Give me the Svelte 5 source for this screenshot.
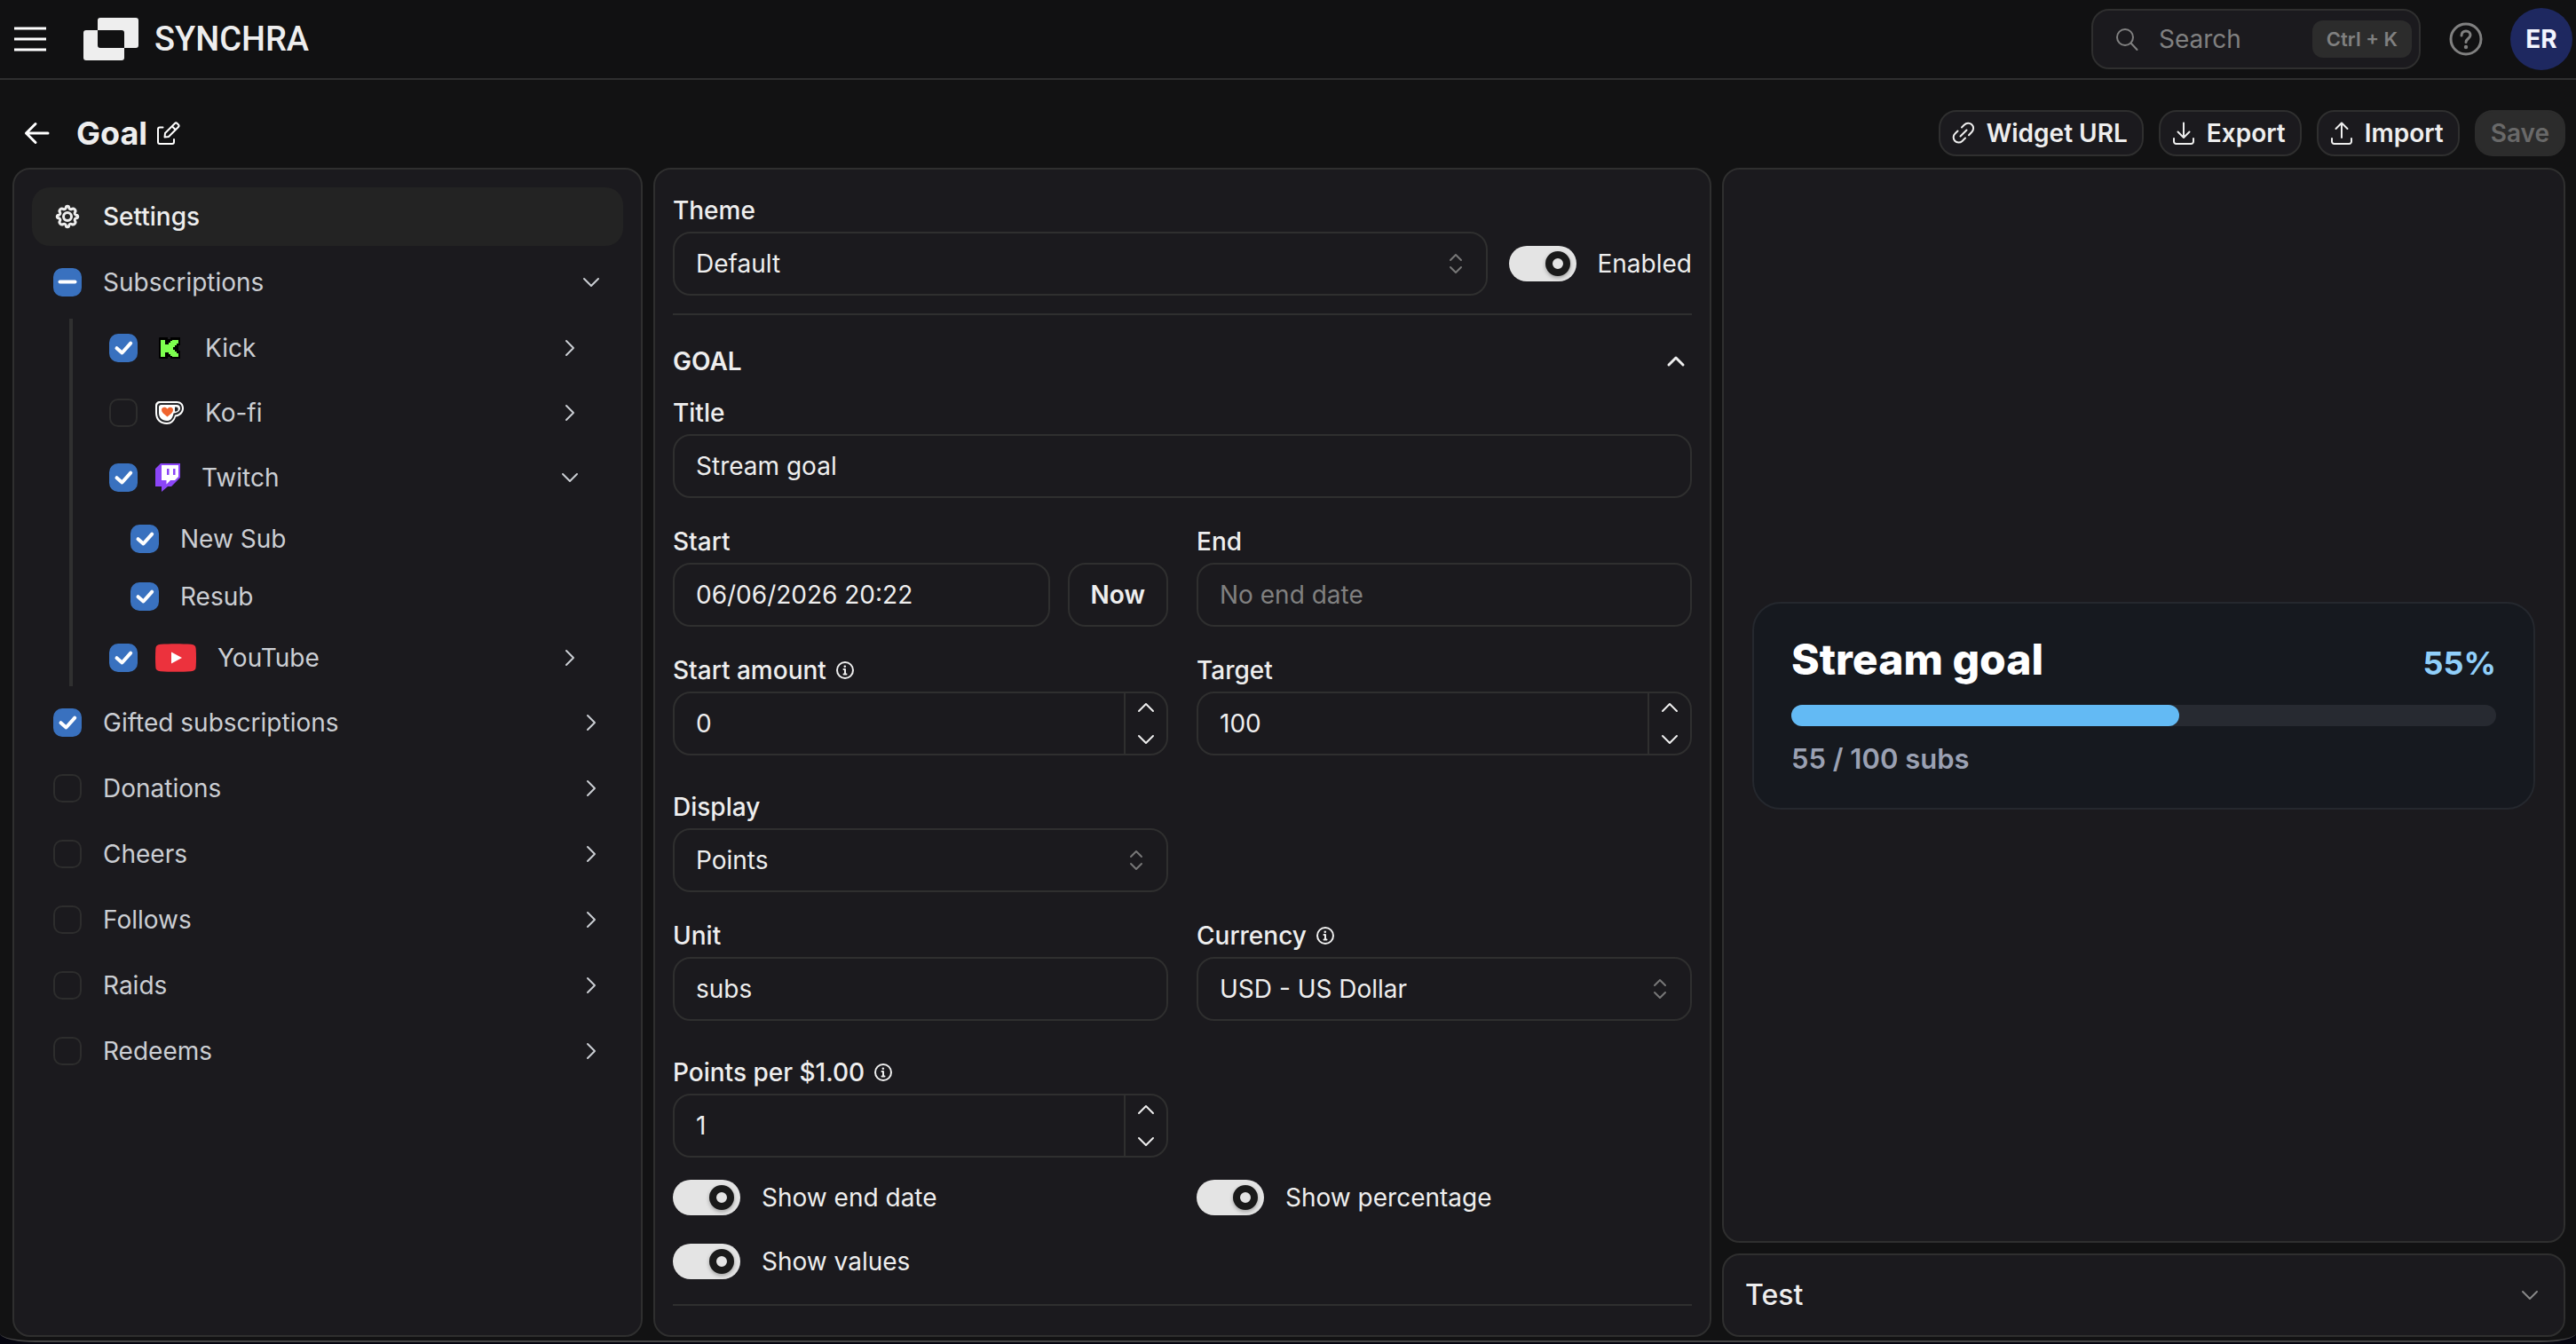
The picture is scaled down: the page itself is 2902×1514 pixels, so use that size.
<script>
	let goal = $state({
		theme: 'Default',
		enabled: true,
		title: 'Stream goal',
		start: '06/06/2026 20:22',
		end: '',
		startAmount: 0,
		target: 100,
		display: 'Points',
		unit: 'subs',
		currency: 'USD - US Dollar',
		points: 1,
		showEnd: true,
		showPercentage: true,
		showValues: true
	});

	let tree = $state([
		{
			id: 'subscriptions', name: 'Subscriptions', checked: false, partial: true, open: true,
			children: [
				{ id: 'kick', name: 'Kick', checked: true },
				{ id: 'kofi', name: 'Ko-fi', checked: false },
				{
					id: 'twitch', name: 'Twitch', checked: true, open: true,
					children: [
						{ id: 'new-sub', name: 'New Sub', checked: true },
						{ id: 'resub', name: 'Resub', checked: true }
					]
				},
				{ id: 'youtube', name: 'YouTube', checked: true }
			]
		},
		{ id: 'gifted', name: 'Gifted subscriptions', checked: true },
		{ id: 'donations', name: 'Donations', checked: false },
		{ id: 'cheers', name: 'Cheers', checked: false },
		{ id: 'follows', name: 'Follows', checked: false },
		{ id: 'raids', name: 'Raids', checked: false },
		{ id: 'redeems', name: 'Redeems', checked: false }
	]);

	const current = 55;
	let percent = $derived(Math.round((current / goal.target) * 100));

	function step(key, amount) {
		goal[key] = Number(goal[key]) + amount;
	}
</script>

{#snippet chevron(dir)}
	<svg class="chevron {dir}" viewBox="0 0 28 28" aria-hidden="true"><path d="M6 10l8 8 8-8" /></svg>
{/snippet}

{#snippet info()}
	<svg class="info" viewBox="0 0 24 24" aria-hidden="true">
		<circle cx="12" cy="12" r="9" />
		<path d="M10.5 11H12v5.5M10.5 16.5h3" />
		<circle class="dot" cx="11.8" cy="7.8" r="1.3" />
	</svg>
{/snippet}

{#snippet brand(id)}
	{#if id === 'kick'}
		<svg class="brand" width="32" height="32" viewBox="0 0 32 32" aria-hidden="true">
			<path fill="#000" d="M5 4h9v2h3V4h11v9h-2v6h2v9H17v-2h-3v2H5a1 1 0 0 1-1-1V5a1 1 0 0 1 1-1z" />
			<path fill="#7dff4f" d="M6 7h5v5h4v-2h2V8h2V7h7v4h-2v2h-2v2h-2v3h2v2h2v2h2v4h-7v-1h-2v-2h-2v-2h-4v5H6z" />
		</svg>
	{:else if id === 'kofi'}
		<svg class="brand" width="32" height="28" viewBox="0 0 32 28" aria-hidden="true">
			<path fill="#fff" d="M5 1h19c5 0 8 3 8 8s-4 9-9 9.500C21.500 24 18 27 13 27 5 27 0 22 0 14V6c0-3 2-5 5-5z" />
			<path fill="#27282b" d="M6 3h18c3.500 0 6 2 6 6s-3.500 7-8 7.500C20.500 22 17.500 25 13 25 6 25 2 20.500 2 14V7c0-2.500 1.500-4 4-4z" />
			<path fill="#fff" d="M6.500 5H24c2.500 0 4 1.500 4 4s-2.500 5-7.500 5.500C19.500 20.500 17 23 13 23 7.500 23 4 19.500 4 14V7.500C4 6 5 5 6.500 5z" />
			<path fill="#27282b" d="M22 7.500h1.500c3 0 3 5-.5 5h-1z" />
			<path fill="#f0642e" d="M13.500 18.500C9.500 15.500 7 13.500 7 10.800 7 7.500 11.500 6.500 13.500 9.700c2-3.200 6.500-2.200 6.500 1.100 0 2.700-2.500 4.700-6.500 7.700z" />
		</svg>
	{:else if id === 'twitch'}
		<svg class="brand" width="28" height="32" viewBox="0 0 28 32" aria-hidden="true">
			<path fill="#8b45f7" d="M6 0h22v16l-10 10h-4l-7 6v-6H0V6z" />
			<path fill="#fff" d="M7 2h19v13l-4 4h-5l-4.500 4.500V19H7z" />
			<path fill="#8b45f7" d="M13 6h2.500v7H13zM20 6h2.500v7H20z" />
		</svg>
	{:else if id === 'youtube'}
		<svg class="brand" width="46" height="32" viewBox="0 0 46 32" aria-hidden="true">
			<path fill="#ec323d" d="M6 .7C16 0 30 0 40 .7c4 .3 5.500 2 5.700 5.300.4 7 .4 13 0 20-.2 3.300-1.700 5-5.700 5.300-10 .7-24 .7-34 0C2 31 .5 29.300.3 26c-.4-7-.4-13 0-20C.5 2.700 2 1 6 .7z" />
			<path fill="#fff" d="M18 9.500l12 6.500-12 6.500z" />
		</svg>
	{/if}
{/snippet}

{#snippet branch(item)}
	<div class="row">
		<span class="check">
			<input type="checkbox" id={item.id} bind:checked={item.checked} indeterminate={item.partial ?? false} />
			<svg viewBox="0 0 32 32" aria-hidden="true">
				<path d={item.partial ? 'M7.500 15.500h17' : 'M8.500 16.200l6 5.300 9.700-10.800'} />
			</svg>
		</span>
		{@render brand(item.id)}
		<label for={item.id}>{item.name}</label>
	</div>
{/snippet}

{#snippet parentRow(item)}
	<div class="line">
		{@render branch(item)}
		<button class="bare" aria-label="Toggle {item.name}" onclick={() => (item.open = !item.open)}>
			{@render chevron(item.open ? 'down' : 'right')}
		</button>
	</div>
{/snippet}

{#snippet toggle(key, text)}
	<label class="toggle">
		<input type="checkbox" role="switch" bind:checked={goal[key]} />
		<span>{text}</span>
	</label>
{/snippet}

{#snippet select(id, key, options)}
	<div class="select">
		<select {id} bind:value={goal[key]}>
			{#each options as option}
				<option>{option}</option>
			{/each}
		</select>
		<svg viewBox="0 0 16 24" aria-hidden="true"><path d="M2 8l6-6 6 6M2 16l6 6 6-6" /></svg>
	</div>
{/snippet}

{#snippet number(id, key)}
	<div class="number">
		<input type="number" {id} bind:value={goal[key]} />
		<div class="steps">
			<button class="bare" aria-label="Increase" onclick={() => step(key, 1)}>{@render chevron('up')}</button>
			<button class="bare" aria-label="Decrease" onclick={() => step(key, -1)}>{@render chevron('down')}</button>
		</div>
	</div>
{/snippet}

<div class="app">
	<header>
		<button class="bare menu" aria-label="Menu">
			<svg width="36" height="28" viewBox="0 0 36 28" aria-hidden="true"><path d="M0 2h36M0 14h36M0 26h36" /></svg>
		</button>
		<a class="logo" href="/">
			<svg width="62" height="48" viewBox="0 0 62 48" aria-hidden="true">
				<path
					fill-rule="evenodd"
					d="M19 0h40a3 3 0 0 1 3 3v28a3 3 0 0 1-3 3H46v11a3 3 0 0 1-3 3H3a3 3 0 0 1-3-3V17a3 3 0 0 1 3-3h13V3a3 3 0 0 1 3-3zM16 14v17a3 3 0 0 0 3 3h27V17a3 3 0 0 0-3-3z"
				/>
			</svg>
			<span>SYNCHRA</span>
		</a>
		<button class="search">
			<svg width="28" height="28" viewBox="0 0 28 28" aria-hidden="true"><circle cx="12" cy="12" r="9" /><path d="M18.500 18.500l7 7.500" /></svg>
			<span>Search</span>
			<kbd>Ctrl + K</kbd>
		</button>
		<button class="bare help" aria-label="Help">
			<svg width="38" height="38" viewBox="0 0 38 38" aria-hidden="true">
				<circle cx="19" cy="19" r="17" />
				<path d="M14 15c0-3 2-5 5-5s5 2 5 4.500c0 4-5 4-5 8" />
				<circle class="dot" cx="19" cy="28" r="2.200" />
			</svg>
		</button>
		<button class="avatar">ER</button>
	</header>

	<div class="toolbar">
		<a class="back" href="/widgets" aria-label="Back">
			<svg width="36" height="36" viewBox="0 0 36 36" aria-hidden="true"><path d="M30 18H5.500M16 7.500L5.500 18 16 28.500" /></svg>
		</a>
		<h1>Goal</h1>
		<button class="bare edit" aria-label="Rename">
			<svg width="28" height="28" viewBox="0 0 28 28" aria-hidden="true">
				<path d="M8.500 7.500H5a2 2 0 0 0-2 2V24a2 2 0 0 0 2 2h14a2 2 0 0 0 2-2v-3" />
				<path d="M10.500 18.500l.5-4.500L22 3a1.800 1.800 0 0 1 2.500 0L26 4.500A1.800 1.800 0 0 1 26 7L15 18zM18.800 6.200l4 4" />
			</svg>
		</button>
		<div class="actions">
			<button class="button">
				<svg width="28" height="28" viewBox="0 0 28 28" aria-hidden="true">
					<path d="M10.500 17.500l7-7M12 7.500l3-3a5.800 5.800 0 0 1 8.500 8l-3.500 3.800M7.500 11.500l-3 3a5.800 5.800 0 0 0 8 8.500l3.500-3.500" />
				</svg>
				Widget URL
			</button>
			<button class="button">
				<svg width="28" height="28" viewBox="0 0 28 28" aria-hidden="true"><path d="M14 2.500v16M7.500 12.500L14 19l6.500-6.500M3 20v3.500a2.500 2.500 0 0 0 2.500 2.500h17a2.500 2.500 0 0 0 2.500-2.500V20" /></svg>
				Export
			</button>
			<button class="button">
				<svg width="28" height="28" viewBox="0 0 28 28" aria-hidden="true"><path d="M14 19V3M7.500 9L14 2.500 20.500 9M3 20v3.500a2.500 2.500 0 0 0 2.500 2.500h17a2.500 2.500 0 0 0 2.500-2.500V20" /></svg>
				Import
			</button>
			<button class="button save" disabled>Save</button>
		</div>
	</div>

	<main>
		<nav class="panel tree">
			<button class="settings">
				<svg width="32" height="32" viewBox="0 0 32 32" aria-hidden="true">
					<path
						d="M14.200 6.300C14.400 3.600 17.600 3.600 17.800 6.300C18 7.600 19.800 8.300 20.900 7.500C22.900 5.800 26.200 9.100 24.500 11.100C23.700 12.200 24.400 14 25.700 14.200C28.400 14.400 28.400 17.600 25.700 17.800C24.400 18 23.700 19.800 24.500 20.900C26.200 22.900 22.900 26.200 20.900 24.500C19.800 23.700 18 24.400 17.800 25.700C17.600 28.400 14.400 28.400 14.200 25.700C14 24.400 12.200 23.700 11.100 24.500C9.100 26.200 5.800 22.900 7.500 20.900C8.300 19.800 7.600 18 6.300 17.800C3.600 17.600 3.600 14.400 6.300 14.200C7.600 14 8.300 12.200 7.500 11.100C5.800 9.100 9.100 5.800 11.100 7.500C12.200 8.300 14 7.600 14.200 6.300Z"
					/>
					<circle cx="16" cy="16" r="4.500" />
				</svg>
				Settings
			</button>
			{#each tree as item (item.id)}
				{@render parentRow(item)}
				{#if item.open && item.children}
					<div class="children">
						{#each item.children as child (child.id)}
							{@render parentRow(child)}
							{#if child.open && child.children}
								<div class="leaves">
									{#each child.children as leaf (leaf.id)}
										{@render branch(leaf)}
									{/each}
								</div>
							{/if}
						{/each}
					</div>
				{/if}
			{/each}
		</nav>

		<section class="panel form">
			<label class="caption" for="theme">Theme</label>
			<div class="theme">
				{@render select('theme', 'theme', ['Default', 'Minimal'])}
				{@render toggle('enabled', 'Enabled')}
			</div>
			<hr />
			<button class="bare section">GOAL {@render chevron('up')}</button>
			<div class="fields">
				<div class="wide">
					<label class="caption" for="title">Title</label>
					<input type="text" id="title" bind:value={goal.title} />
				</div>
				<div>
					<label class="caption" for="start">Start</label>
					<div class="start">
						<input type="text" id="start" bind:value={goal.start} />
						<button class="now">Now</button>
					</div>
				</div>
				<div>
					<label class="caption" for="end">End</label>
					<input type="text" id="end" placeholder="No end date" bind:value={goal.end} />
				</div>
				<div class="spaced">
					<label class="caption" for="start-amount">Start amount {@render info()}</label>
					{@render number('start-amount', 'startAmount')}
				</div>
				<div class="spaced">
					<label class="caption" for="target">Target</label>
					{@render number('target', 'target')}
				</div>
				<div class="first">
					<label class="caption" for="display">Display</label>
					{@render select('display', 'display', ['Points', 'Currency'])}
				</div>
				<div class="first spaced">
					<label class="caption" for="unit">Unit</label>
					<input type="text" id="unit" bind:value={goal.unit} />
				</div>
				<div class="spaced">
					<label class="caption" for="currency">Currency {@render info()}</label>
					{@render select('currency', 'currency', ['USD - US Dollar', 'EUR - Euro'])}
				</div>
				<div class="first spaced">
					<label class="caption" for="points">Points per $1.00 {@render info()}</label>
					{@render number('points', 'points')}
				</div>
			</div>
			<div class="toggles">
				{@render toggle('showEnd', 'Show end date')}
				{@render toggle('showPercentage', 'Show percentage')}
				{@render toggle('showValues', 'Show values')}
			</div>
			<hr />
		</section>

		<div class="side">
			<section class="panel preview">
				<div class="card">
					<div class="card-head">
						<h2>{goal.title}</h2>
						<strong>{percent}%</strong>
					</div>
					<div class="bar"><div class="fill" style="width: {percent}%"></div></div>
					<p>{current} / {goal.target} {goal.unit}</p>
				</div>
			</section>
			<button class="panel test">Test {@render chevron('down')}</button>
		</div>
	</main>
</div>

<style>
	:global(body) {
		background: #05050f;
	}

	.app {
		--line: #2f2f2f;
		--text: #eeeeee;
		--muted: #808080;
		--panel: #1b1a1e;

		box-sizing: border-box;
		display: flex;
		flex-direction: column;
		min-height: calc(100vh - 2px);
		padding-bottom: 4px;
		border-bottom: 2px solid #444444;
		border-radius: 0 0 40px 40px / 0 0 10px 10px;
		background: #121213;
		color: var(--text);
		font-family: Inter, 'Liberation Sans', sans-serif;
		font-size: 28px;
		line-height: 44px;
	}

	.app *,
	.app *::before {
		box-sizing: border-box;
	}

	button,
	input,
	select {
		margin: 0;
		font: inherit;
		color: inherit;
	}

	svg {
		flex: none;
		display: block;
		fill: none;
		stroke: currentColor;
		stroke-width: 3;
		stroke-linecap: round;
		stroke-linejoin: round;
	}

	.dot {
		fill: currentColor;
		stroke: none;
	}

	.bare {
		display: flex;
		align-items: center;
		padding: 0;
		border: 0;
		background: none;
	}

	.chevron {
		width: 28px;
		height: 28px;
		stroke-width: 2;
	}

	.right { transform: rotate(-90deg); }
	.up { transform: rotate(180deg); }

	/* Header */
	header {
		display: flex;
		align-items: center;
		height: 90px;
		padding: 0 4px 0 16px;
		border-bottom: 2px solid var(--line);
		background: #111112;
	}

	.menu {
		color: #ffffff;
	}

	.menu svg {
		stroke-linecap: butt;
	}

	.logo {
		display: flex;
		align-items: center;
		gap: 18px;
		margin: 0 auto 0 42px;
		color: var(--text);
		font-family: Roboto, 'Liberation Sans', sans-serif;
		font-size: 38px;
		font-weight: 500;
		text-decoration: none;
	}

	.logo svg {
		fill: currentColor;
		stroke: none;
	}

	.search {
		display: flex;
		align-items: center;
		width: 371px;
		height: 68px;
		padding: 0 8px 0 24px;
		border: 2px solid var(--line);
		border-radius: 20px;
		background: var(--panel);
		color: var(--muted);
	}

	.search svg {
		margin-right: 22px;
		stroke-width: 2;
	}

	kbd {
		margin-left: auto;
		padding: 0 16px;
		border-radius: 12px;
		background: #2c2c2c;
		font-family: inherit;
		font-size: 22px;
		font-weight: 600;
		line-height: 42px;
	}

	.help {
		margin: 0 31px 0 32px;
		color: var(--muted);
	}

	.avatar {
		width: 70px;
		height: 70px;
		padding: 0;
		border: 0;
		border-radius: 50%;
		background: #1e2860;
		color: #f3f5ff;
		font-weight: 700;
	}

	/* Title bar */
	.toolbar {
		display: flex;
		align-items: center;
		padding: 34px 12px 13px 24px;
	}

	.back {
		color: #ffffff;
	}

	h1 {
		margin: 0 9px 0 26px;
		font-size: 36px;
		font-weight: 700;
	}

	.edit {
		color: #ffffff;
	}

	.edit svg {
		stroke-width: 2;
	}

	.actions {
		display: flex;
		gap: 17px;
		margin-left: auto;
	}

	.button {
		display: flex;
		align-items: center;
		gap: 12px;
		height: 52px;
		padding: 0 16px 0 12px;
		border: 2px solid var(--line);
		border-radius: 20px;
		background: var(--panel);
		font-weight: 600;
	}

	.button svg {
		stroke-width: 2;
	}

	.save {
		padding: 0 16px;
		border-color: #2c2c2c;
		background: #2c2c2c;
		color: #696969;
	}

	/* Panels */
	main {
		flex: 1;
		display: grid;
		grid-template-columns: minmax(0, 355fr) minmax(0, 596fr) minmax(0, 475fr);
		gap: 12px;
		padding: 0 12px 0 14px;
	}

	.panel {
		border: 2px solid var(--line);
		border-radius: 20px;
		background: var(--panel);
	}

	/* Event tree */
	.tree {
		display: flex;
		flex-direction: column;
		gap: 8px;
		padding: 20px;
		color: #cbced3;
	}

	.settings {
		display: flex;
		align-items: center;
		gap: 24px;
		height: 66px;
		padding: 0 24px;
		border: 0;
		border-radius: 20px;
		background: #232323;
		color: var(--text);
		font-weight: 500;
	}

	.line {
		display: flex;
		align-items: center;
		justify-content: space-between;
		height: 66px;
		padding: 0 22px 0 24px;
	}

	.row {
		display: flex;
		align-items: center;
	}

	.row label {
		margin-left: 24px;
	}

	.brand {
		margin-left: 20px;
		stroke: none;
	}

	.check {
		display: grid;
	}

	.check > * {
		grid-area: 1 / 1;
		width: 32px;
		height: 32px;
	}

	.check input {
		appearance: none;
		border: 2px solid #2d2d2d;
		border-radius: 10px;
	}

	.check input:checked,
	.check input:indeterminate {
		border-color: #3971bf;
		background: #3971bf;
	}

	.check svg {
		visibility: hidden;
		color: #ffffff;
		stroke-width: 4;
		pointer-events: none;
	}

	.check input:checked + svg,
	.check input:indeterminate + svg {
		visibility: visible;
	}

	.children {
		display: flex;
		flex-direction: column;
		gap: 8px;
		margin-left: 42px;
		padding-right: 24px;
		border-left: 4px solid #303030;
	}

	.children .line {
		height: 65px;
		padding-left: 41px;
	}

	.leaves {
		margin: -4px 0;
		padding-left: 65px;
	}

	.leaves .row {
		height: 65px;
	}

	/* Form */
	.form {
		padding: 24px 20px 0;
	}

	hr {
		height: 2px;
		margin: 20px 0 16px;
		border: 0;
		background: var(--line);
	}

	.caption {
		display: flex;
		align-items: center;
		gap: 9px;
		margin-bottom: 2px;
		font-weight: 500;
	}

	.info {
		width: 24px;
		height: 24px;
		stroke-width: 2;
	}

	input[type='text'],
	select,
	.number {
		width: 100%;
		height: 72px;
		padding: 0 24px;
		border: 2px solid var(--line);
		border-radius: 20px;
		background: var(--panel);
		outline: none;
	}

	input::placeholder {
		color: var(--muted);
		opacity: 1;
	}

	.select {
		flex: 1;
		display: grid;
		align-items: center;
	}

	.select > * {
		grid-area: 1 / 1;
	}

	select {
		appearance: none;
	}

	.select svg {
		justify-self: end;
		width: 16px;
		height: 24px;
		margin-right: 28px;
		color: #777777;
		stroke-width: 2;
		pointer-events: none;
	}

	.number {
		display: flex;
		padding-right: 0;
	}

	.number input {
		flex: 1;
		min-width: 0;
		padding: 0;
		border: 0;
		background: none;
		outline: none;
		appearance: textfield;
	}

	.number input::-webkit-inner-spin-button {
		appearance: none;
	}

	.steps {
		display: flex;
		flex-direction: column;
		gap: 4px;
		width: 48px;
		border-left: 2px solid var(--line);
	}

	.steps button {
		flex: 1;
		justify-content: center;
	}

	.theme {
		display: flex;
		align-items: center;
		gap: 24px;
	}

	.section {
		justify-content: space-between;
		width: 100%;
		height: 72px;
		padding-right: 4px;
		font-weight: 600;
	}

	.section .chevron {
		stroke-width: 3;
	}

	.fields {
		display: grid;
		grid-template-columns: 1fr 1fr;
		gap: 27px 32px;
	}

	.wide {
		grid-column: 1 / -1;
	}

	.first {
		grid-column: 1;
	}

	.spaced {
		padding-bottom: 9px;
	}

	.start {
		display: flex;
		gap: 20px;
	}

	.start input {
		flex: 1;
		min-width: 0;
	}

	.now {
		padding: 0 24px;
		border: 2px solid var(--line);
		border-radius: 20px;
		background: var(--panel);
		font-weight: 600;
	}

	.toggles {
		display: grid;
		grid-template-columns: 1fr 1fr;
		gap: 32px;
		margin: 16px 0 28px;
	}

	.toggle {
		display: flex;
		align-items: center;
		gap: 24px;
		height: 40px;
	}

	.toggle input {
		appearance: none;
		display: flex;
		align-items: center;
		width: 76px;
		height: 40px;
		padding: 0 7px;
		border-radius: 20px;
		background: var(--line);
	}

	.toggle input::before {
		content: '';
		width: 28px;
		height: 28px;
		border: 8px solid #1a1a1a;
		border-radius: 50%;
		background: #e4e4e4;
		box-shadow: 0 2px 4px rgba(0, 0, 0, 0.3);
	}

	.toggle input:checked {
		justify-content: flex-end;
		background: #e4e4e4;
	}

	/* Preview */
	.side {
		display: flex;
		flex-direction: column;
		gap: 12px;
	}

	.preview {
		flex: 1;
		display: flex;
		align-items: center;
		padding: 0 32px;
	}

	.card {
		flex: 1;
		padding: 34px 42px;
		border: 2px solid #25282e;
		border-radius: 32px;
		background: #16191f;
	}

	.card-head {
		display: flex;
		align-items: baseline;
		justify-content: space-between;
	}

	h2 {
		margin: 0;
		color: #ffffff;
		font-size: 48px;
		font-weight: 800;
		line-height: 58px;
	}

	strong {
		color: #90cffa;
		font-size: 36px;
		font-weight: 700;
	}

	.bar {
		height: 24px;
		margin: 22px 0 16px;
		border-radius: 12px;
		background: #272a31;
	}

	.fill {
		height: 100%;
		border-radius: 12px;
		background: #63baf4;
	}

	p {
		margin: 0;
		color: #9ba1b3;
		font-size: 31px;
		font-weight: 600;
		line-height: 42px;
	}

	.test {
		display: flex;
		align-items: center;
		justify-content: space-between;
		height: 94px;
		padding: 0 24px;
		font-size: 32px;
		font-weight: 500;
	}

	.test .chevron {
		color: #888888;
	}
</style>
